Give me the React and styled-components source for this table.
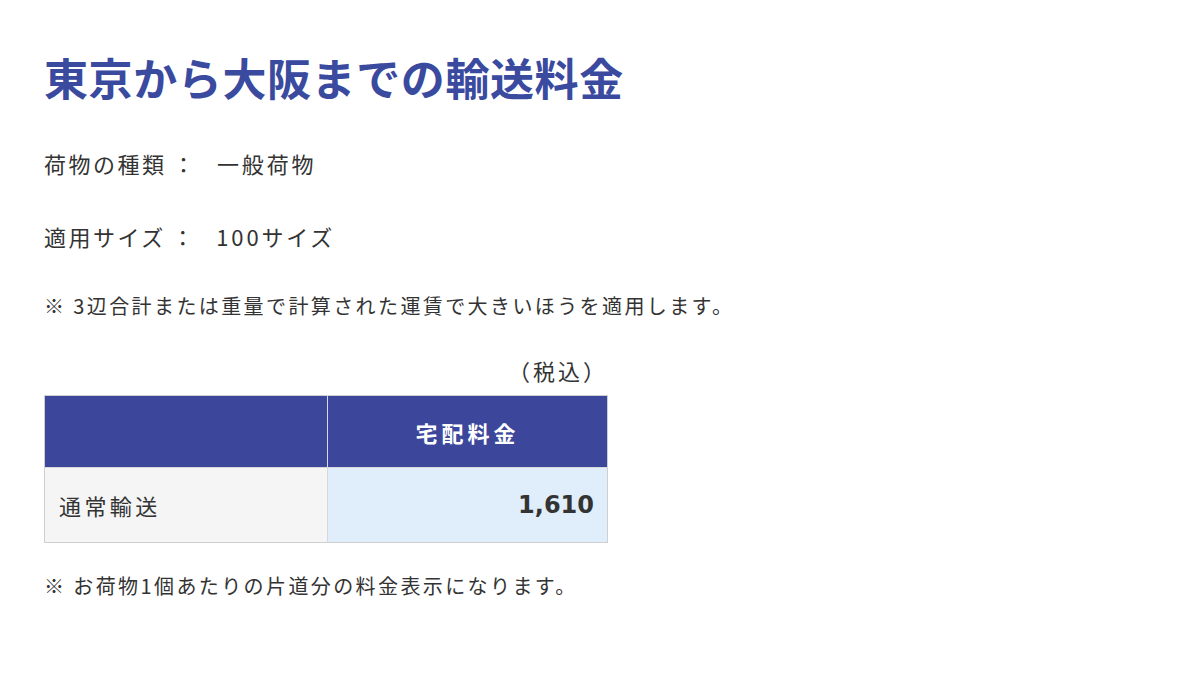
import styled, { createGlobalStyle } from "styled-components";

const GlobalStyle = createGlobalStyle`
  body {
    margin: 0;
    background: #fff;
    font-family: "Noto Sans CJK JP", "Noto Sans", sans-serif;
    color: #333;
  }
`;

const rows = [{ label: "通常輸送", price: "1,610" }];

const App = () => {
  return (
    <>
      <GlobalStyle />
      <Page>
        <Title>東京から大阪までの輸送料金</Title>
        <InfoLine>
          <Label>荷物の種類</Label>
          <Sep>：</Sep>
          <Value>一般荷物</Value>
        </InfoLine>
        <InfoLine>
          <Label>適用サイズ</Label>
          <Sep>：</Sep>
          <Value>100サイズ</Value>
        </InfoLine>
        <Note>※ 3辺合計または重量で計算された運賃で大きいほうを適用します。</Note>
        <TableWrap>
          <Tax>（税込）</Tax>
          <Table>
            <thead>
              <tr>
                <HeadCell />
                <HeadCell>宅配料金</HeadCell>
              </tr>
            </thead>
            <tbody>
              {rows.map((row, index) => (
                <tr key={index}>
                  <NameCell>{row.label}</NameCell>
                  <PriceCell>{row.price}</PriceCell>
                </tr>
              ))}
            </tbody>
          </Table>
        </TableWrap>
        <Footnote>※ お荷物1個あたりの片道分の料金表示になります。</Footnote>
      </Page>
    </>
  );
};

export default App;

const Page = styled.div`
  padding: 47px 44px 40px;
`;

const Title = styled.h1`
  margin: 0;
  font-size: 44px;
  line-height: 60px;
  font-weight: 700;
  color: #3a4a9f;
  letter-spacing: 0.6px;
`;

const InfoLine = styled.div`
  display: flex;
  align-items: center;
  margin-top: 38px;
  font-size: 22px;
  line-height: 36px;
  letter-spacing: 2.5px;
  color: #333;

  & + & {
    margin-top: 37px;
  }
`;

const Label = styled.span``;

const Sep = styled.span`
  margin: 0 20px 0 6px;
`;

const Value = styled.span`
  letter-spacing: 2.8px;
`;

const Note = styled.p`
  margin: 37px 0 0;
  font-size: 20px;
  line-height: 30px;
  letter-spacing: 2.4px;
  color: #333;
`;

const TableWrap = styled.div`
  width: 564px;
  margin-top: 34px;
`;

const Tax = styled.div`
  text-align: right;
  font-size: 22px;
  line-height: 30px;
  letter-spacing: 3px;
  margin-bottom: 10px;
  color: #333;
`;

const Table = styled.table`
  width: 564px;
  border-collapse: collapse;
  table-layout: fixed;
  border: 1px solid #cfcfcf;
`;

const HeadCell = styled.th`
  height: 71px;
  padding: 0;
  background: #3c479c;
  color: #fff;
  font-size: 22px;
  font-weight: 700;
  letter-spacing: 4px;
  text-align: center;
  border-left: 1px solid #d6d9ea;

  &:first-child {
    width: 282px;
    border-left: none;
  }
`;

const NameCell = styled.td`
  height: 74px;
  padding: 0 0 0 14px;
  background: #f5f5f5;
  font-size: 22px;
  letter-spacing: 3.4px;
  color: #333;
  border-top: 1px solid #d8d8d8;
  border-right: 1px solid #d8d8d8;
`;

const PriceCell = styled.td`
  height: 74px;
  padding: 0 13px 0 0;
  background: #dfeefa;
  text-align: right;
  font-family: "DejaVu Sans", sans-serif;
  font-size: 24px;
  font-weight: 700;
  color: #333;
  border-top: 1px solid #d8d8d8;
`;

const Footnote = styled.p`
  margin: 28px 0 0;
  font-size: 20px;
  line-height: 30px;
  letter-spacing: 2.4px;
  color: #333;
`;
